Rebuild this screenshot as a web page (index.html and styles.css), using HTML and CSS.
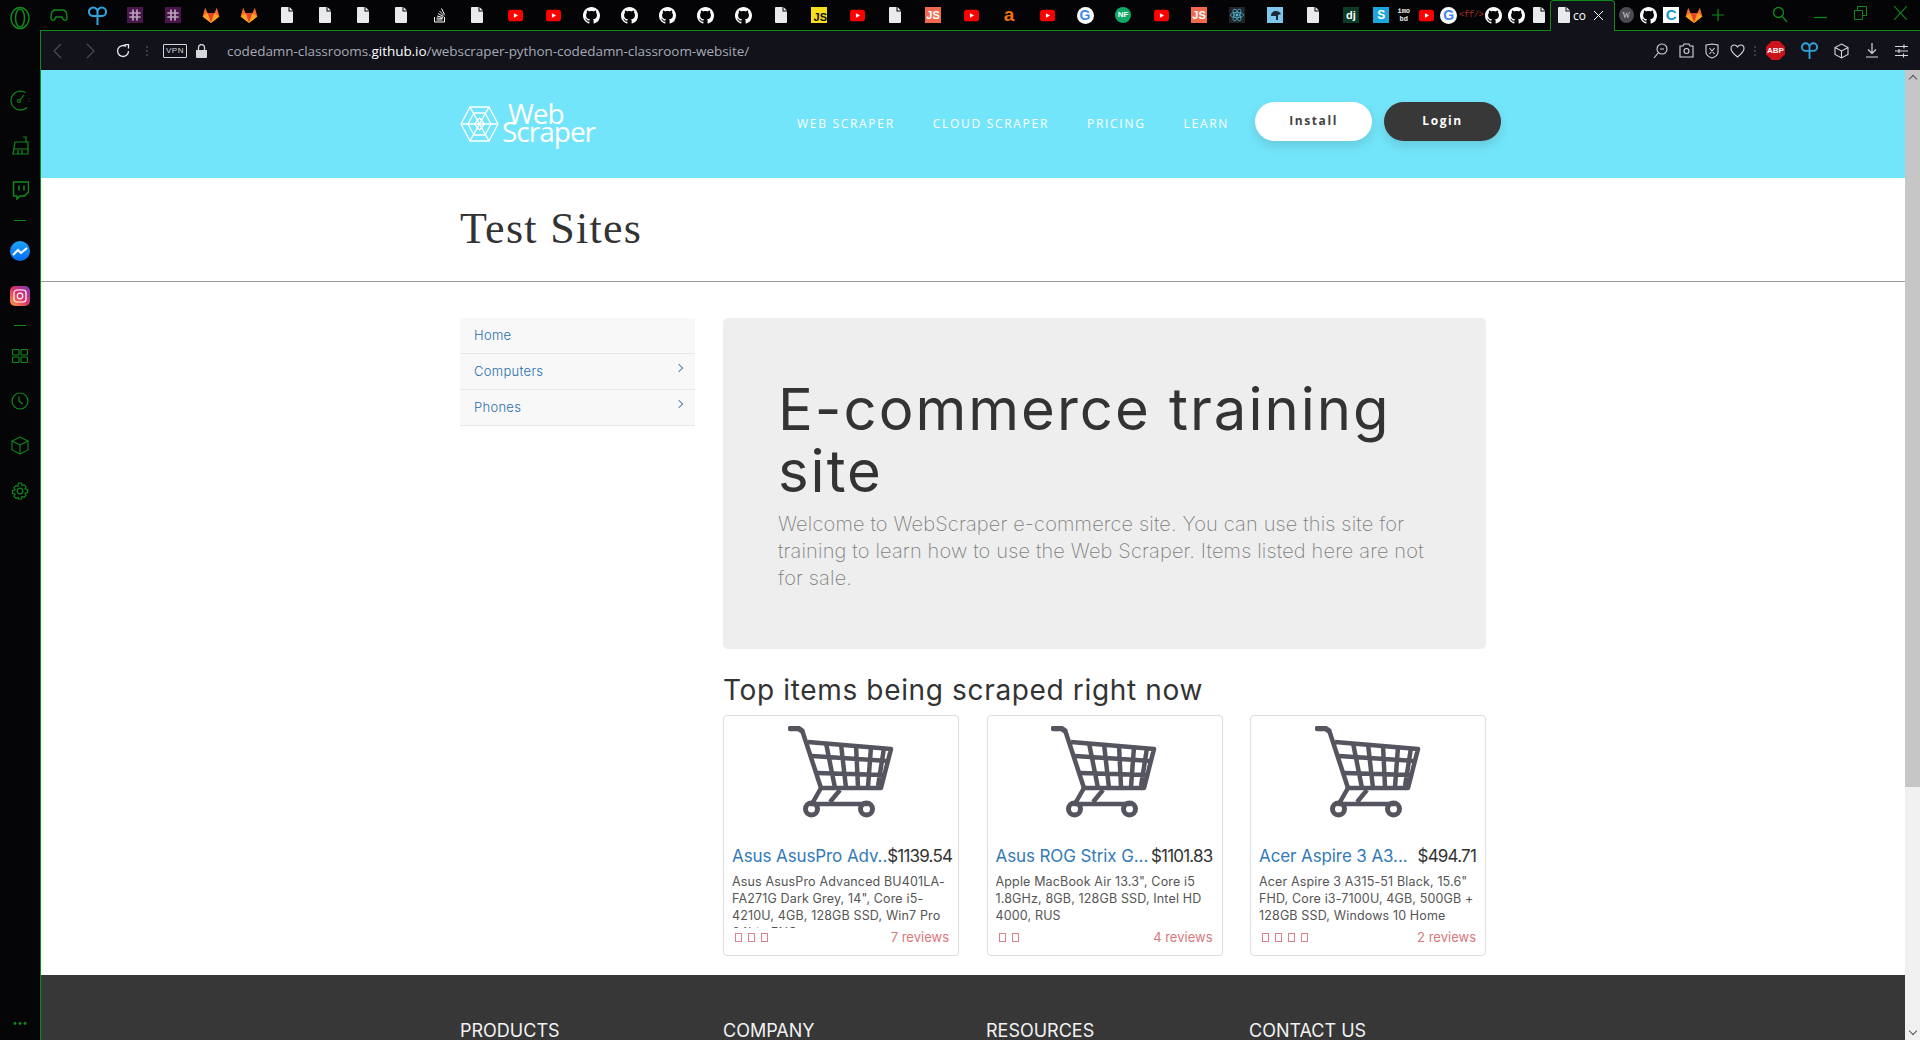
FILE: index.html
```html
<!DOCTYPE html>
<html>

<head>
  <meta charset="utf-8">
  <title>Web Scraper Test Sites</title>
  <link rel="stylesheet" href="styles.css">
</head>

<body>
  <svg class="sprites" xmlns="http://www.w3.org/2000/svg">
    <symbol id="i-doc" viewBox="0 0 12 16">
      <path d="M1 0h6.5v4.5H12V15a1 1 0 0 1-1 1H1a1 1 0 0 1-1-1V1a1 1 0 0 1 1-1zM8.5 0 12 3.5H8.5z" fill="#e8eaed" />
    </symbol>
    <symbol id="i-gh" viewBox="0 0 16 16">
      <path fill="#fff" d="M8 0C3.58 0 0 3.58 0 8c0 3.54 2.29 6.53 5.47 7.59.4.07.55-.17.55-.38 0-.19-.01-.82-.01-1.49-2.01.37-2.53-.49-2.69-.94-.09-.23-.48-.94-.82-1.13-.28-.15-.68-.52-.01-.53.63-.01 1.08.58 1.23.82.72 1.21 1.87.87 2.33.66.07-.52.28-.87.51-1.07-1.78-.2-3.64-.89-3.64-3.95 0-.87.31-1.59.82-2.15-.08-.2-.36-1.02.08-2.12 0 0 .67-.21 2.2.82.64-.18 1.32-.27 2-.27.68 0 1.36.09 2 .27 1.53-1.04 2.2-.82 2.2-.82.44 1.1.16 1.92.08 2.12.51.56.82 1.27.82 2.15 0 3.07-1.87 3.75-3.65 3.95.29.25.54.73.54 1.48 0 1.07-.01 1.93-.01 2.2 0 .21.15.46.55.38A8.013 8.013 0 0 0 16 8c0-4.42-3.58-8-8-8z" />
    </symbol>
    <symbol id="i-yt" viewBox="0 0 16 16">
      <rect x="1" y="2.5" width="14" height="11" rx="2.5" fill="#f00" />
      <path d="M6.5 5.8 10.4 8l-3.9 2.2z" fill="#fff" />
    </symbol>
    <symbol id="i-gitlab" viewBox="0 0 16 16">
      <path d="M8 15 .6 9.4 2.8 1.5 5 6.5h6l2.2-5 2.2 7.900z" fill="#fc6d26" />
      <path d="M8 15 5 6.500h6z" fill="#e24329" />
      <path d="M8 15 .6 9.4 5 6.500zM8 15l7.400-5.600L11 6.500z" fill="#fca326" />
    </symbol>
    <symbol id="i-slack" viewBox="0 0 16 16">
      <rect width="16" height="16" fill="#4a154b" />
      <path d="M6 3v10M10 3v10M3 6h10M3 10h10" stroke="#b9a3bb" stroke-width="1.700" stroke-linecap="round" />
    </symbol>
    <symbol id="i-pcloud" viewBox="0 0 20 22">
      <path d="M10 21V7a4.500 4.500 0 1 1 4.500 4.500H10M10 7a4.500 4.500 0 1 0-4.500 4.500H10" fill="none" stroke="#2ea3dc" stroke-width="2.200" />
    </symbol>
    <symbol id="i-cart" viewBox="0 0 106 92">
      <g fill="none" stroke="#55555f" stroke-linejoin="round">
        <path d="M2.500 2.500h8l3 2" stroke-width="5.500" stroke-linecap="round" />
        <path d="M14 4 33 62h60l10-39-83-7" stroke-width="4.500" />
        <path d="M24 30 100 35M29 47 97 49M38 17l9 45M53 18l5 44M68 19l2 42M83 21l-3 40M96 22l-6 38" stroke-width="4.500" />
        <path d="M33 62 25 76M52 64 42 76M22 78h58" stroke-width="4.500" />
        <circle cx="23.500" cy="83" r="6" stroke-width="5" />
        <circle cx="78.500" cy="83" r="6" stroke-width="5" />
      </g>
    </symbol>
  </svg>

  <div class="browser">
    <div class="tabstrip">
      <div class="opera-logo">
        <svg width="20" height="24" viewBox="0 0 20 24" fill="none" stroke="#118a1a" stroke-width="1.500">
          <ellipse cx="10" cy="12" rx="9" ry="10.500" />
          <ellipse cx="10" cy="12" rx="4.500" ry="9" />
        </svg>
      </div>
      <div class="tabs">
        <span class="tab"><svg width="18" height="16" viewBox="0 0 18 14" fill="none" stroke="#118a1a" stroke-width="1.500"><path d="M5 2h8c3 0 4 4 4 8 0 3-3 3-4 1l-1-2H6l-1 2c-1 2-4 2-4-1 0-4 1-8 4-8z" /></svg></span>
        <span class="tab"><svg width="19" height="21"><use href="#i-pcloud" /></svg></span>
        <span class="tab"><svg width="16" height="16"><use href="#i-slack" /></svg></span>
        <span class="tab"><svg width="16" height="16"><use href="#i-slack" /></svg></span>
        <span class="tab"><svg width="18" height="18"><use href="#i-gitlab" /></svg></span>
        <span class="tab"><svg width="18" height="18"><use href="#i-gitlab" /></svg></span>
        <span class="tab"><svg width="12" height="16"><use href="#i-doc" /></svg></span>
        <span class="tab"><svg width="12" height="16"><use href="#i-doc" /></svg></span>
        <span class="tab"><svg width="12" height="16"><use href="#i-doc" /></svg></span>
        <span class="tab"><svg width="12" height="16"><use href="#i-doc" /></svg></span>
        <span class="tab"><svg width="13" height="16" viewBox="0 0 13 16" fill="none" stroke="#fff"><path d="M1.500 10v5h10v-5M3.500 13h6M3.500 11l6 .5M4 9l6 1.500M5 6.500l5.500 3M6.500 4l4.500 4.500M8.500 1.500l3 6" /></svg></span>
        <span class="tab"><svg width="12" height="16"><use href="#i-doc" /></svg></span>
        <span class="tab"><svg width="17" height="17"><use href="#i-yt" /></svg></span>
        <span class="tab"><svg width="17" height="17"><use href="#i-yt" /></svg></span>
        <span class="tab"><svg width="17" height="17"><use href="#i-gh" /></svg></span>
        <span class="tab"><svg width="17" height="17"><use href="#i-gh" /></svg></span>
        <span class="tab"><svg width="17" height="17"><use href="#i-gh" /></svg></span>
        <span class="tab"><svg width="17" height="17"><use href="#i-gh" /></svg></span>
        <span class="tab"><svg width="17" height="17"><use href="#i-gh" /></svg></span>
        <span class="tab"><svg width="12" height="16"><use href="#i-doc" /></svg></span>
        <span class="tab"><span class="fav fav-njs">JS</span></span>
        <span class="tab"><svg width="17" height="17"><use href="#i-yt" /></svg></span>
        <span class="tab"><svg width="12" height="16"><use href="#i-doc" /></svg></span>
        <span class="tab"><span class="fav fav-js">JS</span></span>
        <span class="tab"><svg width="17" height="17"><use href="#i-yt" /></svg></span>
        <span class="tab"><span class="fav-amazon">a</span></span>
        <span class="tab"><svg width="17" height="17"><use href="#i-yt" /></svg></span>
        <span class="tab"><span class="fav-google">G</span></span>
        <span class="tab"><span class="fav-nf">NF</span></span>
        <span class="tab"><svg width="17" height="17"><use href="#i-yt" /></svg></span>
        <span class="tab"><span class="fav fav-js">JS</span></span>
        <span class="tab"><span class="fav fav-react"><svg width="14" height="14" viewBox="0 0 16 16" fill="none" stroke="#53c1de" stroke-width=".8"><ellipse cx="8" cy="8" rx="7.500" ry="3" /><ellipse cx="8" cy="8" rx="7.500" ry="3" transform="rotate(60 8 8)" /><ellipse cx="8" cy="8" rx="7.500" ry="3" transform="rotate(120 8 8)" /><circle cx="8" cy="8" r="1.300" fill="#53c1de" /></svg></span></span>
        <span class="tab"><span class="fav fav-sky"><svg width="16" height="16" viewBox="0 0 16 16" fill="#1c2a33"><path d="M4 9c0-3 2-5 5-5 2 0 4 1 5 3l-3 1v5H9V9H7z" /></svg></span></span>
        <span class="tab"><svg width="12" height="16"><use href="#i-doc" /></svg></span>
        <span class="tab"><span class="fav fav-dj">dj</span></span>
        <span class="tab tab-narrow"><span class="fav fav-s">S</span></span>
        <span class="tab tab-narrow"><span class="fav-imdb">imo<br>bd</span></span>
        <span class="tab tab-narrow"><svg width="17" height="17"><use href="#i-yt" /></svg></span>
        <span class="tab tab-narrow"><span class="fav-google">G</span></span>
        <span class="tab tab-narrow"><span class="fav-ff">&lt;ff/&gt;</span></span>
        <span class="tab tab-narrow"><svg width="17" height="17"><use href="#i-gh" /></svg></span>
        <span class="tab tab-narrow"><svg width="17" height="17"><use href="#i-gh" /></svg></span>
        <span class="tab tab-narrow"><svg width="12" height="16"><use href="#i-doc" /></svg></span>
        <span class="tab-active">
          <svg width="12" height="16"><use href="#i-doc" /></svg>
          <span class="tab-title">co</span>
          <svg width="11" height="11" viewBox="0 0 11 11" stroke="#fff"><path d="M1 1l9 9M10 1l-9 9" /></svg>
        </span>
        <span class="tab tab-narrow"><span class="fav-w">W</span></span>
        <span class="tab tab-narrow"><svg width="17" height="17"><use href="#i-gh" /></svg></span>
        <span class="tab tab-narrow"><span class="fav-c">C</span></span>
        <span class="tab tab-narrow"><svg width="18" height="18"><use href="#i-gitlab" /></svg></span>
        <span class="tab-new"><svg width="12" height="12" viewBox="0 0 12 12" stroke="#118a1a" stroke-width="1.200"><path d="M6 0v12M0 6h12" /></svg></span>
        <span class="window-controls">
          <span class="win-btn"><svg width="16" height="18" viewBox="0 0 16 18" fill="none" stroke="#118a1a" stroke-width="1.300"><circle cx="6.500" cy="6.500" r="5" /><path d="M10 10l5 6" /></svg></span>
          <span class="win-btn"><svg width="13" height="14" stroke="#118a1a" stroke-width="1.200"><path d="M0 11.500h13" /></svg></span>
          <span class="win-btn"><svg width="13" height="14" viewBox="0 0 13 14" fill="none" stroke="#118a1a"><path d="M.5 4.500h8v9h-8zM3.500 4.500v-4h9v9h-4" /></svg></span>
          <span class="win-btn"><svg width="13" height="14" viewBox="0 0 13 14" stroke="#118a1a" stroke-width="1.100"><path d="M0 0l13 14M13 0 0 14" /></svg></span>
        </span>
      </div>
    </div>

    <div class="browser-body">
      <aside class="sidebar">
        <span class="side-item"><svg width="21" height="21" viewBox="0 0 21 21" fill="none" stroke="#118a1a" stroke-width="1.200"><path d="M17 17.500A9.500 9.500 0 1 1 15.500 2.500" /><circle cx="9" cy="11" r="1.500" /><path d="M10 10l4-5M19 8v.5M19.500 11v.5" /></svg></span>
        <span class="side-item"><svg width="17" height="19" viewBox="0 0 17 19" fill="none" stroke="#118a1a" stroke-width="1.200"><path d="M11 1h3v5M3 6h13v12H1zM1.500 13h14.500M6 14v4M10 14v4" /></svg></span>
        <span class="side-item"><svg width="17" height="19" viewBox="0 0 17 19" fill="none" stroke="#118a1a" stroke-width="1.500"><path d="M1.500 1h15v10l-4 4H8l-3 3v-3H1.500zM7 4.500v5M12 4.500v5" /></svg></span>
        <span class="side-sep"></span>
        <span class="side-item"><span class="fav-messenger"><svg width="16" height="12" viewBox="0 0 16 12" fill="none" stroke="#fff" stroke-width="2"><path d="M1 10l5-5 3 3 6-5" /></svg></span></span>
        <span class="side-item"><span class="fav-insta"><svg width="14" height="14" viewBox="0 0 14 14" fill="none" stroke="#fff" stroke-width="1.200"><rect x="1" y="1" width="12" height="12" rx="3" /><circle cx="7" cy="7" r="2.800" /></svg></span></span>
        <span class="side-sep"></span>
        <span class="side-item"><svg width="16" height="14" viewBox="0 0 16 14" fill="none" stroke="#118a1a" stroke-width="1.100"><rect x=".5" y=".5" width="6.500" height="5.500" rx="1" /><rect x="9" y=".5" width="6.500" height="5.500" rx="1" /><rect x=".5" y="8" width="6.500" height="5.500" rx="1" /><rect x="9" y="8" width="6.500" height="5.500" rx="1" /></svg></span>
        <span class="side-item"><svg width="18" height="18" viewBox="0 0 18 18" fill="none" stroke="#118a1a" stroke-width="1.200"><circle cx="9" cy="9" r="8" /><path d="M8 4.500V9l3.500 3" /></svg></span>
        <span class="side-item"><svg width="18" height="19" viewBox="0 0 18 19" fill="none" stroke="#118a1a" stroke-width="1.100"><path d="M9 1l8 4v9l-8 4-8-4V5zM1 5l8 4 8-4M9 9v9" /></svg></span>
        <span class="side-item"><svg width="18" height="18" viewBox="0 0 18 18" fill="none" stroke="#118a1a" stroke-width="1.200"><circle cx="9" cy="9" r="2.800" /><path d="M7.500 1h3l.5 2.500 2-.8 2 2-1 2.100 2.500.7v3l-2.500.7 1 2.100-2 2-2-.8-.5 2.500h-3L7 15.500l-2 .8-2-2 1-2.100-2.500-.7v-3L4 7.800 3 5.700l2-2 2 .8z" /></svg></span>
        <span class="side-more">•••</span>
      </aside>

      <div class="browser-main">
        <div class="addressbar">
          <svg class="nav-icon nav-back" width="10" height="16" viewBox="0 0 10 16" fill="none" stroke="#4a4c54" stroke-width="1.200"><path d="M9 1 2 8l7 7" /></svg>
          <svg class="nav-icon nav-forward" width="10" height="16" viewBox="0 0 10 16" fill="none" stroke="#4a4c54" stroke-width="1.200"><path d="M1 1l7 7-7 7" /></svg>
          <svg class="nav-icon nav-reload" width="14" height="14" viewBox="0 0 14 14" fill="none" stroke="#e8eaed" stroke-width="1.300"><path d="M12.500 7A5.500 5.500 0 1 1 10 2.400" /><path d="M8.500 0.500h4v4" /></svg>
          <span class="bar-dots"></span>
          <span class="vpn">VPN</span>
          <svg class="lock" width="11" height="14" viewBox="0 0 11 14" fill="#d5d7db"><path d="M0 6h11v7a1 1 0 0 1-1 1H1a1 1 0 0 1-1-1z" /><path d="M2.500 6V3.500a3 3 0 0 1 6 0V6" fill="none" stroke="#d5d7db" stroke-width="1.300" /></svg>
          <span class="url">codedamn-classrooms.<b>github.io</b>/webscraper-python-codedamn-classroom-website/</span>
          <span class="bar-tools">
            <svg width="15" height="16" viewBox="0 0 15 16" fill="none" stroke="#d5d7db" stroke-width="1.100"><circle cx="9" cy="6" r="5" /><path d="M5.500 9.500 1 15M7 6h4" /></svg>
            <svg width="15" height="15" viewBox="0 0 15 15" fill="none" stroke="#d5d7db" stroke-width="1.100"><path d="M1 3h3l1-2h5l1 2h3v11H1z" /><circle cx="7.500" cy="8" r="2.500" /></svg>
            <svg width="14" height="16" viewBox="0 0 14 16" fill="none" stroke="#d5d7db" stroke-width="1.100"><path d="M1 2l6-1 6 1v7c0 3-3 5-6 6-3-1-6-3-6-6zM4.500 5l5 6M9.500 5l-5 6" /></svg>
            <svg width="15" height="14" viewBox="0 0 15 14" fill="none" stroke="#d5d7db" stroke-width="1.100"><path d="M7.500 13C3 9.500 1 7.500 1 4.500 1 2.500 2.500 1 4.200 1c1.400 0 2.600.8 3.300 2 .7-1.200 1.900-2 3.300-2C12.500 1 14 2.500 14 4.500c0 3-2 5-6.500 8.500z" /></svg>
            <span class="bar-dots"></span>
            <span class="bar-group">
              <span class="abp">ABP</span>
              <svg width="17" height="19"><use href="#i-pcloud" /></svg>
              <svg width="15" height="16" viewBox="0 0 15 16" fill="none" stroke="#d5d7db" stroke-width="1.100"><path d="M7.500 1 14 4.500v7L7.500 15 1 11.500v-7zM1 4.500 7.500 8 14 4.500M7.500 8v7" /></svg>
              <svg width="14" height="15" viewBox="0 0 14 15" fill="none" stroke="#d5d7db" stroke-width="1.200"><path d="M7 0v10M3 6.500 7 10.500l4-4M1 14h12" /></svg>
              <svg width="13" height="14" viewBox="0 0 13 14" fill="none" stroke="#d5d7db" stroke-width="1.200"><path d="M0 2.500h13M0 7h13M0 11.500h13M9 .5v4M4 5v4M8.500 9.500v4" /></svg>
            </span>
          </span>
        </div>

        <div class="viewport">
          <div class="page">
            <header class="site-header">
              <div class="container header-row">
                <a class="logo">
                  <svg width="39" height="36" viewBox="0 0 39 36" fill="none" stroke="#fff" stroke-width="1.300">
                    <path d="M10 1h19l9 17-9 17H10L1 18z" />
                    <path d="M14 7h11l6 11-6 11H14L8 18z" />
                    <path d="M1 18h37M10 1l19 34M29 1 10 35M19.500 12l5 6-5 6-5-6z" />
                  </svg>
                  <span class="logo-text"><span>Web</span><span class="logo-scraper">Scraper</span></span>
                </a>
                <nav class="site-nav">
                  <a>WEB SCRAPER</a>
                  <a>CLOUD SCRAPER</a>
                  <a>PRICING</a>
                  <a>LEARN</a>
                </nav>
                <div class="header-buttons">
                  <a class="btn-pill btn-install">Install</a>
                  <a class="btn-pill btn-login">Login</a>
                </div>
              </div>
            </header>

            <div class="title-row">
              <div class="container">
                <h1 class="page-title">Test Sites</h1>
              </div>
            </div>

            <div class="container content">
              <ul class="side-menu">
                <li><a>Home</a></li>
                <li><a>Computers</a><span class="chevron"></span></li>
                <li><a>Phones</a><span class="chevron"></span></li>
              </ul>

              <main class="main-col">
                <div class="jumbotron">
                  <h1>E-commerce training site</h1>
                  <p>Welcome to WebScraper e-commerce site. You can use this site for training to learn how to use the Web Scraper. Items listed here are not for sale.</p>
                </div>

                <h2 class="section-title">Top items being scraped right now</h2>

                <div class="cards">
                  <div class="card">
                    <svg class="card-img" width="106" height="92"><use href="#i-cart" /></svg>
                    <div class="card-head">
                      <a class="card-title">Asus AsusPro Adv..</a>
                      <span class="card-price">$1139.54</span>
                    </div>
                    <p class="card-desc">Asus AsusPro Advanced BU401LA-FA271G Dark Grey, 14", Core i5-4210U, 4GB, 128GB SSD, Win7 Pro 64bit, ENG</p>
                    <div class="card-foot">
                      <span class="stars"><i></i><i></i><i></i></span>
                      <span class="reviews">7 reviews</span>
                    </div>
                  </div>
                  <div class="card">
                    <svg class="card-img" width="106" height="92"><use href="#i-cart" /></svg>
                    <div class="card-head">
                      <a class="card-title">Asus ROG Strix G...</a>
                      <span class="card-price">$1101.83</span>
                    </div>
                    <p class="card-desc">Apple MacBook Air 13.3", Core i5 1.8GHz, 8GB, 128GB SSD, Intel HD 4000, RUS</p>
                    <div class="card-foot">
                      <span class="stars"><i></i><i></i></span>
                      <span class="reviews">4 reviews</span>
                    </div>
                  </div>
                  <div class="card">
                    <svg class="card-img" width="106" height="92"><use href="#i-cart" /></svg>
                    <div class="card-head">
                      <a class="card-title">Acer Aspire 3 A3...</a>
                      <span class="card-price">$494.71</span>
                    </div>
                    <p class="card-desc">Acer Aspire 3 A315-51 Black, 15.6" FHD, Core i3-7100U, 4GB, 500GB + 128GB SSD, Windows 10 Home</p>
                    <div class="card-foot">
                      <span class="stars"><i></i><i></i><i></i><i></i></span>
                      <span class="reviews">2 reviews</span>
                    </div>
                  </div>
                </div>
              </main>
            </div>

            <footer class="site-footer">
              <div class="container footer-row">
                <h4>PRODUCTS</h4>
                <h4>COMPANY</h4>
                <h4>RESOURCES</h4>
                <h4>CONTACT US</h4>
              </div>
            </footer>
          </div>

          <div class="scrollbar">
            <span class="scroll-arrow scroll-up"></span>
            <span class="scroll-thumb"></span>
            <span class="scroll-arrow scroll-down"></span>
          </div>
        </div>
      </div>
    </div>
  </div>
</body>

</html>
```

FILE: styles.css
```css
* {
  box-sizing: border-box;
}

html,
body {
  margin: 0;
  height: 100%;
  overflow: hidden;
}

body {
  font-family: Inter, "Noto Sans", sans-serif;
  background: #050508;
  color: #333;
}

.sprites {
  display: none;
}

.browser {
  display: flex;
  flex-direction: column;
  height: 1040px;
}

/* tab strip */

.tabstrip {
  display: flex;
  height: 31px;
  flex: none;
  background: #040406;
}

.opera-logo {
  width: 40px;
  flex: none;
  display: flex;
  align-items: center;
  justify-content: center;
  padding-top: 4px;
  background: #050508;
}

.tabs {
  flex: 1;
  display: flex;
  align-items: center;
  height: 31px;
  border-bottom: 1px solid #118a1a;
}

.tab {
  width: 38px;
  flex: none;
  height: 30px;
  display: flex;
  align-items: center;
  justify-content: center;
}

.tab-narrow {
  width: 22.5px;
}

.tab-active {
  width: 65px;
  height: 31px;
  flex: none;
  display: flex;
  align-items: center;
  gap: 3px;
  padding: 0 0 1px 7px;
  background: #12121a;
  border: 1px solid #118a1a;
  border-bottom: none;
  border-radius: 4px 4px 0 0;
}

.tab-title {
  color: #fff;
  font: 12px "Open Sans", sans-serif;
  width: 17px;
}

.tab-new {
  width: 25px;
  flex: none;
  display: flex;
  justify-content: center;
}

.window-controls {
  margin-left: auto;
  display: flex;
}

.win-btn {
  width: 40px;
  display: flex;
  justify-content: center;
}

/* little favicons */

.fav {
  width: 16px;
  height: 16px;
  display: flex;
  align-items: center;
  justify-content: center;
  font: bold 11px "Liberation Sans", sans-serif;
  color: #fff;
}

.fav-njs {
  background: #f7df1e;
  color: #111;
  align-items: flex-end;
  justify-content: flex-end;
  line-height: 11px;
}

.fav-js {
  background: #f16a50;
}

.fav-react {
  background: #20232a;
}

.fav-sky {
  background: #7cc7ea;
}

.fav-dj {
  background: #0c3c26;
}

.fav-s {
  background: #1ba6dc;
  font-size: 12px;
}

.fav-amazon {
  color: #f36f10;
  font: bold 19px "Liberation Sans", sans-serif;
  line-height: 16px;
}

.fav-google {
  width: 17px;
  height: 17px;
  border-radius: 50%;
  background: #fff;
  color: #4285f4;
  text-align: center;
  font: bold 14px/17px "Liberation Sans", sans-serif;
}

.fav-nf {
  width: 16px;
  height: 16px;
  border-radius: 50%;
  background: #0fa968;
  color: #fff;
  text-align: center;
  font: bold 8px/16px "Liberation Sans", sans-serif;
}

.fav-imdb {
  color: #eee;
  font: bold 7px/8px "Liberation Mono", monospace;
  text-align: center;
}

.fav-ff {
  color: #a33018;
  font: 9px "Liberation Mono", monospace;
  letter-spacing: -0.5px;
}

.fav-w {
  width: 15px;
  height: 16px;
  border-radius: 50%;
  background: #4b4b52;
  color: #ddd;
  text-align: center;
  font: 8px/18px "Liberation Serif", serif;
}

.fav-c {
  width: 16px;
  height: 16px;
  background: #fff;
  color: #1597c9;
  text-align: center;
  font: bold 15px/16px "Liberation Sans", sans-serif;
}

/* under the tabs */

.browser-body {
  flex: 1;
  display: flex;
  min-height: 0;
}

.sidebar {
  width: 41px;
  flex: none;
  display: flex;
  flex-direction: column;
  align-items: center;
  padding: 47px 0 0;
  background: #050508;
  border-right: 1px solid #118a1a;
}

.side-item {
  height: 45px;
  flex: none;
  display: flex;
  align-items: center;
  justify-content: center;
}

.side-sep {
  width: 12px;
  height: 15px;
  flex: none;
  background: linear-gradient(#118a1a, #118a1a) center / 12px 1px no-repeat;
}

.side-more {
  margin-top: auto;
  margin-bottom: 12px;
  color: #118a1a;
  font-size: 9px;
  letter-spacing: 0;
}

.fav-messenger {
  width: 20px;
  height: 20px;
  border-radius: 50%;
  background: linear-gradient(#1aa4f8, #0a6af0);
  display: flex;
  align-items: center;
  justify-content: center;
}

.fav-insta {
  width: 20px;
  height: 20px;
  border-radius: 5px;
  background: linear-gradient(45deg, #f9a33a, #e1306c 50%, #7a3ab8);
  display: flex;
  align-items: center;
  justify-content: center;
}

.browser-main {
  flex: 1;
  min-width: 0;
  display: flex;
  flex-direction: column;
}

/* address bar */

.addressbar {
  height: 39px;
  flex: none;
  display: flex;
  align-items: center;
  padding-left: 11px;
  background: #12121a;
}

.nav-forward {
  margin-left: 24px;
}

.nav-reload {
  margin-left: 20px;
}

.bar-dots {
  width: 2px;
  height: 10px;
  margin-left: 16px;
  background: repeating-linear-gradient(#3a3b42 0 2px, transparent 2px 4px);
}

.vpn {
  margin-left: 15px;
  width: 24px;
  height: 14px;
  border: 1px solid #d5d7db;
  border-radius: 1px;
  color: #d5d7db;
  text-align: center;
  font: 8px/12px "Liberation Sans", sans-serif;
  letter-spacing: 0.5px;
}

.lock {
  margin-left: 9px;
}

.url {
  margin-left: 20px;
  color: #a5aab5;
  font: 13.500px "Open Sans", sans-serif;
  letter-spacing: -0.06px;
}

.url b {
  color: #fff;
  font-weight: 400;
}

.bar-tools {
  margin-left: auto;
  padding-right: 12px;
  display: flex;
  align-items: center;
  gap: 11px;
}

.bar-tools .bar-dots {
  margin: 0 -2px;
}

.bar-group {
  display: flex;
  align-items: center;
  gap: 16px;
  margin-left: 1px;
}

.abp {
  width: 19px;
  height: 19px;
  clip-path: polygon(30% 0, 70% 0, 100% 30%, 100% 70%, 70% 100%, 30% 100%, 0 70%, 0 30%);
  background: #c9141c;
  color: #fff;
  text-align: center;
  font: bold 8px/19px "Liberation Sans", sans-serif;
}

/* the page itself */

.viewport {
  flex: 1;
  min-height: 0;
  display: flex;
  background: #fff;
}

.page {
  flex: 1;
  min-width: 0;
  overflow: hidden;
}

.container {
  width: 1026px;
  margin: 0 auto;
}

.site-header {
  height: 108px;
  background: #73e5fa;
}

.header-row {
  display: flex;
  align-items: center;
  height: 108px;
  width: 1026px;
}

.logo {
  display: flex;
  align-items: center;
  color: #fff;
  width: 337px;
  flex: none;
}

.logo-text {
  display: flex;
  flex-direction: column;
  margin-left: 3px;
  font: 400 28px/18px "Open Sans", sans-serif;
  letter-spacing: -1px;
  padding-bottom: 5px;
}

.logo-text span:first-child {
  margin-left: 6px;
}

.site-nav {
  display: flex;
  gap: 38px;
  flex: none;
  margin-bottom: 2px;
}

.site-nav a {
  color: #fff;
  font: 400 12px "Open Sans", sans-serif;
  letter-spacing: 1.7px;
}

.header-buttons {
  display: flex;
  gap: 12px;
  margin-left: 26px;
  margin-bottom: 5px;
  flex: none;
}

.btn-pill {
  width: 117px;
  height: 39px;
  border-radius: 20px;
  text-align: center;
  font: 700 12px/37px "Open Sans", sans-serif;
  letter-spacing: 1.6px;
  box-shadow: 0 5px 12px rgba(0, 0, 0, 0.12);
}

.btn-install {
  background: #fff;
  color: #444;
}

.btn-login {
  background: #383838;
  color: #fff;
}

.title-row {
  height: 104px;
  border-bottom: 1px solid #999;
}

.page-title {
  margin: 0;
  padding-top: 27px;
  font: 400 44px/1.1 "Liberation Serif", serif;
  letter-spacing: 1.3px;
  color: #333;
}

.content {
  display: flex;
  gap: 28px;
  padding-top: 36px;
  height: 693px;
}

.side-menu {
  width: 235px;
  flex: none;
  margin: 0;
  padding: 0;
  list-style: none;
  align-self: flex-start;
  background: #f8f8f8;
}

.side-menu li {
  height: 36px;
  display: flex;
  align-items: center;
  justify-content: space-between;
  padding: 0 13px 2px 14px;
  border-bottom: 1px solid #e7e7e7;
  font-size: 13px;
  font-weight: 300;
  letter-spacing: 0.3px;
  color: #2a6db0;
}

.chevron {
  width: 6px;
  height: 6px;
  margin-bottom: 6px;
  border-top: 1px solid #5f84b0;
  border-right: 1px solid #5f84b0;
  transform: rotate(45deg);
}

.main-col {
  flex: 1;
  min-width: 0;
}

.jumbotron {
  height: 331px;
  padding: 60px 55px 0;
  border-radius: 5px;
  background: #eee;
}

.jumbotron h1 {
  margin: 0;
  font-size: 58px;
  font-weight: 400;
  line-height: 62px;
  letter-spacing: 2px;
  color: #333;
}

.jumbotron p {
  margin: 9px 0 0;
  font-size: 20px;
  font-weight: 200;
  line-height: 27px;
  letter-spacing: 0.16px;
  color: #7f7f7f;
}

.section-title {
  margin: 26px 0 9px;
  font-size: 28px;
  font-weight: 400;
  line-height: 31px;
  letter-spacing: 0.65px;
  color: #333;
}

.cards {
  display: grid;
  grid-template-columns: repeat(3, 236px);
  justify-content: space-between;
}

.card {
  height: 241px;
  padding: 10px 9px 0 8px;
  display: flex;
  flex-direction: column;
  border: 1px solid #ddd;
  border-radius: 4px;
}

.card-img {
  display: block;
  margin: 0 auto;
  flex: none;
}

.card-head {
  display: flex;
  align-items: baseline;
  justify-content: space-between;
  margin-top: 28px;
  font-size: 17px;
  line-height: 20px;
}

.card-title {
  color: #337ab7;
  white-space: nowrap;
  letter-spacing: -0.1px;
}

.card-price {
  color: #333;
  letter-spacing: -0.8px;
}

.card-desc {
  margin: 7px 0 0;
  height: 55px;
  overflow: hidden;
  font-size: 12.500px;
  line-height: 17px;
  letter-spacing: 0.15px;
  color: #555;
}

.card-foot {
  display: flex;
  align-items: center;
  justify-content: space-between;
  margin-top: 1px;
}

.stars {
  display: flex;
  gap: 6px;
  padding-left: 3px;
}

.stars i {
  width: 7px;
  height: 9px;
  border: 1px solid #d98088;
}

.reviews {
  color: #d9777d;
  font-size: 13px;
}

.site-footer {
  height: 70px;
  background: #373737;
  padding-top: 46px;
}

.footer-row {
  display: grid;
  grid-template-columns: repeat(4, 263px);
  width: 1026px;
}

.footer-row h4 {
  margin: 0;
  font-size: 18px;
  font-weight: 400;
  line-height: 20px;
  color: #f2f2f2;
}

/* scrollbar */

.scrollbar {
  width: 15px;
  flex: none;
  display: flex;
  flex-direction: column;
  background: #f1f1f1;
}

.scroll-thumb {
  height: 717px;
  margin-top: -15px;
  background: #c6c6c6;
}

.scroll-arrow {
  height: 15px;
  flex: none;
  position: relative;
}

.scroll-arrow::after {
  content: "";
  position: absolute;
  left: 5px;
  width: 5px;
  height: 5px;
  border-left: 1px solid #555;
  border-top: 1px solid #555;
}

.scroll-up {
  z-index: 1;
}

.scroll-up::after {
  top: 6px;
  transform: rotate(45deg);
}

.scroll-down {
  margin-top: auto;
}

.scroll-down::after {
  top: 3px;
  transform: rotate(225deg);
}
```
